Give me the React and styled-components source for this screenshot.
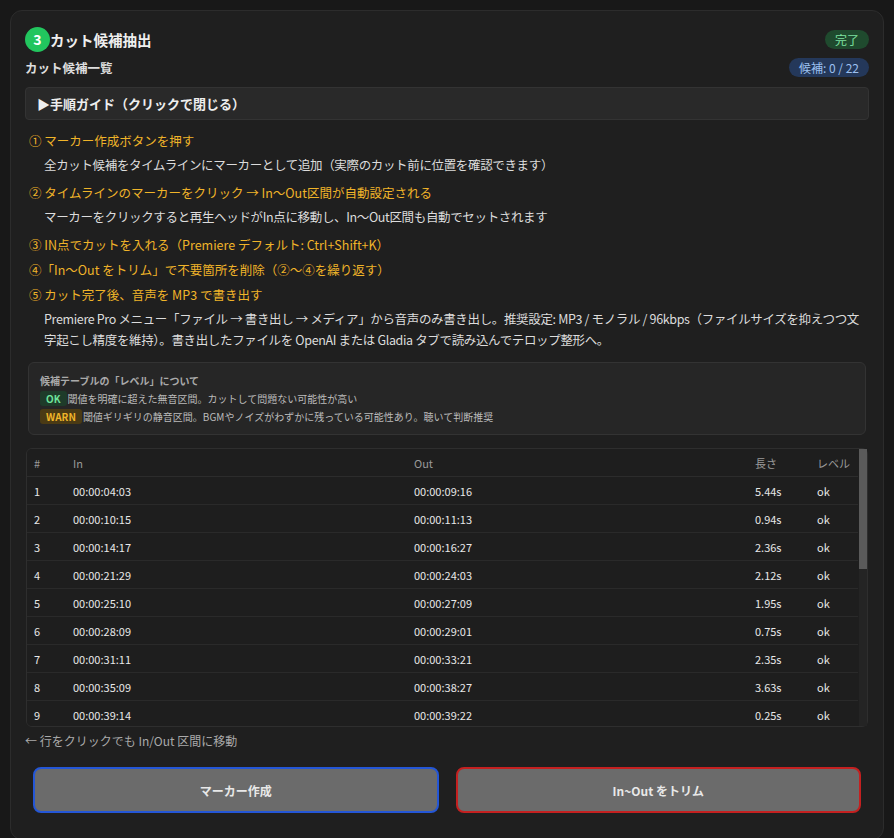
import React from "react";
import styled, { createGlobalStyle } from "styled-components";

const Global = createGlobalStyle`
  html, body { margin: 0; background: #181818; }
  body { font-family: "Noto Sans CJK JP", "Noto Sans", sans-serif; color: #e6e6e6; }
  * { box-sizing: border-box; }
`;

const Page = styled.div`
  padding: 10px 10px 0 10px;
  height: 838px;
  overflow: hidden;
`;
const Card = styled.div`
  background: #1f1f1f;
  border: 1px solid #2c2c2c;
  border-radius: 12px;
  padding: 15px 14px 18px 14px;
  height: 830px;
`;
const TitleRow = styled.div`
  display: flex; align-items: center; justify-content: space-between;
  height: 26px;
`;
const Title = styled.div`
  display: flex; align-items: center; font-size: 14.5px; font-weight: 700; color: #eee;
`;
const Step = styled.span`
  width: 25px; height: 25px; border-radius: 50%; background: #22c55e; color: #fff;
  display: inline-flex; align-items: center; justify-content: center; font-size: 14px; font-weight: 700;
`;
const Pill = styled.span`
  font-size: 12px; padding: 1px 10px; border-radius: 10px;
  background: ${p => p.$bg}; color: ${p => p.$fg};
`;
const SubRow = styled.div`
  display: flex; align-items: center; justify-content: space-between; margin-top: 4px; height: 22px;
`;
const Sub = styled.div`font-size: 12.5px; font-weight: 700; color: #ddd;`;
const Guide = styled.div`
  margin-top: 9px; background: #292929; border: 1px solid #333; border-radius: 4px;
  height: 33px; display: flex; align-items: center; padding: 0 11px; font-size: 13px; font-weight: 700; color: #eee;
`;
const Steps = styled.div`padding: 11px 4px 0 4px;`;
const StepHead = styled.div`
  color: #f0b429; font-size: 12.5px; line-height: 20px; margin-top: ${p => p.$mt || 0}px;
`;
const StepBody = styled.div`
  color: #dcdcdc; font-size: 12.5px; line-height: 21px; padding-left: 15px; margin-top: 3px;
  letter-spacing: -0.35px;
`;
const Note = styled.div`
  margin: 12px 3px 0 3px; background: #262626; border: 1px solid #333; border-radius: 6px;
  padding: 9px 11px; font-size: 10px; color: #bbb; line-height: 18px; height: 73px;
`;
const NoteTitle = styled.div`font-weight: 700; color: #aaa;`;
const Tag = styled.span`
  display: inline-block; font-weight: 700; font-size: 10px; padding: 0 6px; line-height: 15px; border-radius: 3px;
  background: ${p => p.$bg}; color: ${p => p.$fg}; margin-right: 1px;
`;
const TableBox = styled.div`
  position: relative; margin: 13px 1px 0 1px;
`;
const TableWrap = styled.div`
  border: 1px solid #2e2e2e; border-radius: 6px; height: 279px;
  overflow-y: scroll; background: #1e1e1e; scrollbar-width: none;
  &::-webkit-scrollbar { display: none; }
`;
const Track = styled.div`
  position: absolute; top: 1px; right: 1px; bottom: 1px; width: 8px; background: #242424;
  &::after { content: ""; position: absolute; top: 0; left: 0; right: 0; height: 120px; background: #5a5a5a; }
`;
const Table = styled.table`
  width: calc(100% - 9px); border-collapse: separate; border-spacing: 0; font-size: 11px; color: #e8e8e8;
  th { text-align: left; font-weight: 400; color: #9a9a9a; height: 28px; border-bottom: 1px solid #2c2c2c; }
  td { height: 28px; border-bottom: 1px solid #2a2a2a; }
  th:first-child, td:first-child { padding-left: 7px; width: 45px; }
  th:nth-child(2) { width: 341px; }
  th:nth-child(3) { width: 341px; }
  th:nth-child(4) { width: 62px; }
`;
const Hint = styled.div`font-size: 12px; color: #aaa; margin-top: 5px;`;
const Buttons = styled.div`
  display: grid; grid-template-columns: 1fr 1fr; gap: 17px; padding: 0 8px; margin-top: 18px;
`;
const Btn = styled.button`
  height: 46px; border-radius: 8px; background: #6b6b6b; color: #e8e8e8; font-family: inherit;
  font-size: 12px; font-weight: 700; border: 2px solid ${p => p.$c};
`;

const rows = [
  ["00:00:04:03","00:00:09:16","5.44s"],["00:00:10:15","00:00:11:13","0.94s"],
  ["00:00:14:17","00:00:16:27","2.36s"],["00:00:21:29","00:00:24:03","2.12s"],
  ["00:00:25:10","00:00:27:09","1.95s"],["00:00:28:09","00:00:29:01","0.75s"],
  ["00:00:31:11","00:00:33:21","2.35s"],["00:00:35:09","00:00:38:27","3.63s"],
  ["00:00:39:14","00:00:39:22","0.25s"],["00:00:41:02","00:00:43:10","2.27s"],
  ["00:00:45:18","00:00:46:20","1.07s"],["00:00:48:05","00:00:50:11","2.20s"],
  ["00:00:52:23","00:00:53:29","1.20s"],["00:00:55:14","00:00:58:02","2.59s"],
  ["00:01:00:07","00:01:01:19","1.40s"],["00:01:03:12","00:01:05:00","1.60s"],
  ["00:01:07:21","00:01:09:08","1.49s"],["00:01:11:03","00:01:13:27","2.80s"],
  ["00:01:15:16","00:01:16:10","0.80s"],["00:01:18:25","00:01:21:04","2.32s"],
  ["00:01:23:09","00:01:24:15","1.20s"],["00:01:26:02","00:01:28:20","2.60s"],
];

export default function App() {
  return (
    <Page>
      <Global />
      <Card>
        <TitleRow>
          <Title><Step>3</Step>カット候補抽出</Title>
          <Pill $bg="#1f4a2e" $fg="#7ee2a0">完了</Pill>
        </TitleRow>
        <SubRow>
          <Sub>カット候補一覧</Sub>
          <Pill $bg="#24385a" $fg="#9cc0f0">候補: 0 / 22</Pill>
        </SubRow>
        <Guide>▶手順ガイド（クリックで閉じる）</Guide>
        <Steps>
          <StepHead>① マーカー作成ボタンを押す</StepHead>
          <StepBody>全カット候補をタイムラインにマーカーとして追加（実際のカット前に位置を確認できます）</StepBody>
          <StepHead $mt={8}>② タイムラインのマーカーをクリック → In～Out区間が自動設定される</StepHead>
          <StepBody>マーカーをクリックすると再生ヘッドがIn点に移動し、In～Out区間も自動でセットされます</StepBody>
          <StepHead $mt={8}>③ IN点でカットを入れる（Premiere デフォルト: Ctrl+Shift+K）</StepHead>
          <StepHead $mt={5}>④「In～Out をトリム」で不要箇所を削除（②～④を繰り返す）</StepHead>
          <StepHead $mt={5}>⑤ カット完了後、音声を MP3 で書き出す</StepHead>
          <StepBody>Premiere Pro メニュー「ファイル → 書き出し → メディア」から音声のみ書き出し。推奨設定: MP3 / モノラル / 96kbps（ファイルサイズを抑えつつ文字起こし精度を維持）。書き出したファイルを OpenAI または Gladia タブで読み込んでテロップ整形へ。</StepBody>
        </Steps>
        <Note>
          <NoteTitle>候補テーブルの「レベル」について</NoteTitle>
          <div><Tag $bg="#1e3b2a" $fg="#6ee29a">OK</Tag>閾値を明確に超えた無音区間。カットして問題ない可能性が高い</div>
          <div><Tag $bg="#4a3a14" $fg="#f0b429">WARN</Tag>閾値ギリギリの静音区間。BGMやノイズがわずかに残っている可能性あり。聴いて判断推奨</div>
        </Note>
        <TableBox>
          <TableWrap>
            <Table>
              <thead><tr><th>#</th><th>In</th><th>Out</th><th>長さ</th><th>レベル</th></tr></thead>
              <tbody>
                {rows.map((r, i) => (
                  <tr key={i}><td>{i + 1}</td><td>{r[0]}</td><td>{r[1]}</td><td>{r[2]}</td><td>ok</td></tr>
                ))}
              </tbody>
            </Table>
          </TableWrap>
          <Track />
        </TableBox>
        <Hint>← 行をクリックでも In/Out 区間に移動</Hint>
        <Buttons>
          <Btn $c="#2456d6">マーカー作成</Btn>
          <Btn $c="#c42020">In~Out をトリム</Btn>
        </Buttons>
      </Card>
    </Page>
  );
}
